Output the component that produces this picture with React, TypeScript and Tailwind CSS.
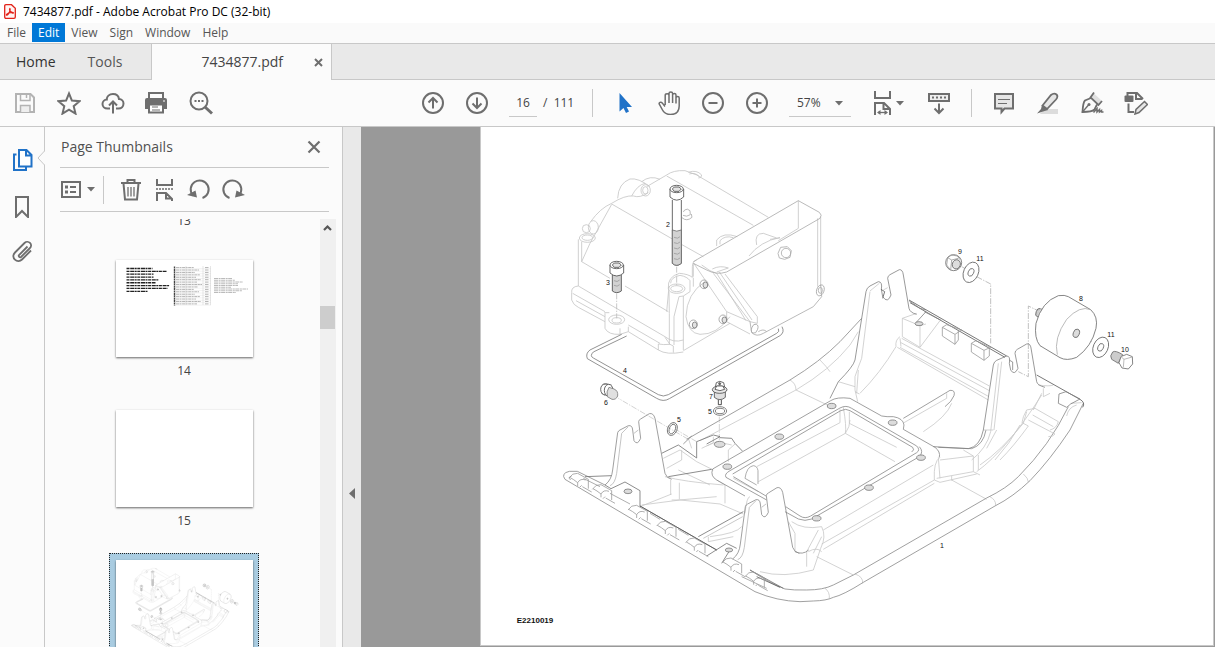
import React from "react";

const G = "#6e6e6e";

type IconProps = { box: string; w?: string; children: React.ReactNode };

function Icon({ box, w = "w-6 h-6", children }: IconProps) {
  return (
    <svg viewBox={box} className={`${w} shrink-0`} fill="none" stroke={G} strokeWidth="2" aria-hidden="true">
      {children}
    </svg>
  );
}

function Tool({ label, className = "w-11", children }: { label: string; className?: string; children: React.ReactNode }) {
  return (
    <button type="button" aria-label={label} className={`flex h-9 shrink-0 items-center justify-center ${className}`}>
      {children}
    </button>
  );
}

function Caret() {
  return (
    <svg viewBox="0 0 8 5" className="h-[5px] w-2 shrink-0" aria-hidden="true">
      <path d="M0 0h8L4 4.6z" fill={G} />
    </svg>
  );
}

const EAR =
  "M165 345Q185 330 188 300L203 188Q205 182 210 180L235 167Q247 165 248 180L252 212Q262 228 272 205L266 155Q266 150 272 147L298 131Q310 128 315 145L345 310Q350 325 365 328";
const EAR_INNER = "M215 190L200 310Q195 342 180 347M235 170L215 190M252 190L265 180";
const TEETH: [number, number][] = [
  [75, 328],
  [145, 362],
  [252, 424],
  [338, 472],
  [425, 522],
  [535, 582],
  [603, 624],
];
const HOLES: [number, number][] = [
  [845, 108],
  [688, 200],
  [532, 290],
  [800, 445],
  [1028, 158],
  [1113, 263],
  [957, 353],
];
const LABELS: [string, number, number][] = [
  ["2", 668, 227],
  ["3", 608, 285],
  ["4", 625, 373],
  ["6", 606, 405],
  ["7", 711, 399],
  ["5", 710, 414],
  ["5", 679, 422],
  ["9", 960, 254],
  ["11", 980, 261],
  ["8", 1081, 301],
  ["11", 1111, 337],
  ["10", 1125, 352],
  ["1", 942, 548],
];

function Housing() {
  return (
    <g transform="translate(550 150) scale(.33333)">
      <g stroke="#c4c4c4">
        <path d="M85 408V268M65 428Q63 410 85 408L165 455L345 560Q370 580 400 570M65 428V450Q70 465 85 472L165 515M68 430L165 485M235 525L330 580M78 452L165 500M95 335L120 280L185 163M95 335V275M95 335L180 385M225 408L355 485" />
        <ellipse cx="112" cy="264" rx="24" ry="13" />
        <ellipse cx="112" cy="263" rx="16" ry="8" />
        <circle cx="109" cy="236" r="12" />
        <ellipse cx="130" cy="232" rx="15" ry="20" />
        <path d="M122 215Q150 175 185 160Q225 135 250 138Q270 145 295 128M203 145Q205 100 240 87Q265 83 300 110M245 138Q262 105 285 100M275 95Q300 75 330 88M290 110L350 75Q370 60 405 62L440 75L655 202M350 78L610 226M185 162L367 267M394 283L460 320" />
        <ellipse cx="287" cy="121" rx="14" ry="17" />
        <ellipse cx="286" cy="121" rx="8" ry="11" />
        <path d="M415 67Q440 58 455 75Q455 85 445 84M418 72Q436 66 448 80" />
        <ellipse cx="200" cy="509" rx="24" ry="14" />
        <ellipse cx="200" cy="511" rx="14" ry="8" />
        <path d="M165 490V535Q175 555 210 553L235 545V530M210 553V535M163 488L178 488M235 545L325 600Q350 616 400 606M325 600V582Q340 585 360 583L345 562M370 608V588L360 583" />
        <ellipse cx="380" cy="416" rx="25" ry="14" />
        <ellipse cx="380" cy="416" rx="18" ry="9" />
        <path d="M357 410L350 485M357 425L358 490V583M400 438L387 440L372 500V585M400 438V600M355 415Q352 380 388 370Q415 372 427 382V350Q427 335 440 330M362 400Q362 382 390 376Q412 380 420 392V425L400 438M430 383V410M400 602L540 520" />
        <path d="M430 340V380M490 370L600 515M455 345L480 362L500 370L588 512M525 372L622 500V520L600 515L530 485M430 338L530 485V515L600 552M508 366L606 510" />
        <path d="M745 152V235L685 272M812 200V408M803 205V410M500 288V270Q520 245 562 260M510 283V272Q525 255 550 263M620 285Q612 250 640 250L680 264M597 318Q630 275 690 262M487 357Q510 345 535 354L500 366M660 268L690 264" />
        <path d="M465 395Q410 430 408 500Q415 550 450 553Q500 555 540 500" />
      </g>
      <g stroke="#a8a8a8">
        <path d="M430 335L745 152L808 187Q818 195 810 205L530 366Q500 376 470 360L430 340M812 405L815 440L790 470L640 550Q620 562 605 548L600 515M625 545Q640 535 650 545" />
        <ellipse cx="811" cy="421" rx="11" ry="17" transform="rotate(20 811 421)" />
        <ellipse cx="811" cy="421" rx="6" ry="9" />
        <ellipse cx="614" cy="536" rx="9" ry="14" transform="rotate(20 614 536)" />
        <path d="M684 310L692 292L712 290L724 302L720 322L704 328L688 324Z" />
        <circle cx="708" cy="309" r="14" />
        <path d="M400 186L404 180Q412 174 420 182L421 194Q410 202 399 196M396 203Q410 216 426 202L424 192" />
      </g>
      <g stroke="#777">
        {[
          [462, 403],
          [430, 523],
          [519, 508],
        ].map(([x, y]) => (
          <g key={x}>
            <ellipse cx={x} cy={y} rx="12" ry="13" stroke="#999" />
            <ellipse cx={x + 4} cy={y + 2} rx="7" ry="9" fill="#e2e2e2" />
          </g>
        ))}
      </g>
      <g stroke="#444">
        <path d="M367 150V340Q380 352 394 340V150" fill="#fff" />
        <path d="M367 240Q380 247 394 240V340Q380 352 367 340Z" fill="#d2d2d2" stroke="#666" />
        <path d="M372 262q12 6 18-2M372 278q12 6 18-2M372 294q12 6 18-2M372 310q12 6 18-2M372 326q12 6 18-2" stroke="#999" />
        <path d="M360 117V141Q380 160 401 141V117" fill="#fff" />
        <ellipse cx="380" cy="117" rx="20" ry="11" fill="#fff" />
        <path d="M367 117L373 111H387L394 117L387 124H373Z" fill="#e4e4e4" />
        <path d="M187 375V423Q200 433 214 423V375" fill="#d2d2d2" />
        <path d="M192 392q10 6 17-2M192 406q10 6 17-2" stroke="#999" />
        <path d="M180 345V369Q200 387 221 369V345" fill="#fff" />
        <ellipse cx="200" cy="345" rx="20" ry="11" fill="#fff" />
        <path d="M187 345L193 339H207L214 345L207 352H193Z" fill="#e4e4e4" />
      </g>
      <path d="M380 350V408M200 430V505" stroke="#bbb" strokeDasharray="18 4 4 4" />
      <path
        d="M215 553L120 600Q106 610 112 626L320 745Q340 757 358 746L690 557Q705 547 696 530M230 558L130 606Q118 618 130 624L325 734Q340 742 355 734L680 550Q690 545 685 536"
        stroke="#777"
      />
      <g stroke="#444">
        <ellipse cx="166" cy="718" rx="14" ry="17" fill="#fff" />
        <path d="M158 704L172 702L186 706M154 730L166 736" stroke="#777" />
        <ellipse cx="176" cy="721" rx="13" ry="18" fill="#fff" />
        <path d="M177 712L192 717Q205 722 203 738Q198 750 186 748L172 740Q168 725 177 712Z" fill="#e0e0e0" stroke="#777" />
        <path d="M495 716L499 698Q509 690 521 698L525 716" fill="#fff" />
        <path d="M493 726V742Q510 756 526 742V726" fill="#e0e0e0" />
        <ellipse cx="509" cy="719" rx="22" ry="11" fill="#e8e8e8" />
        <path d="M495 718L500 708L518 708L524 718Q510 726 495 718Z" fill="#fff" />
        <circle cx="509" cy="701" r="3" fill="#777" />
        <path d="M505 750V764H514V750" stroke="#222" />
      </g>
    </g>
  );
}

function RightSide() {
  return (
    <g transform="translate(820 230) scale(.33333)">
      <g stroke="#c8c8c8">
        <path d="M150 185L125 385Q115 410 105 440V480L113 515M178 160L150 183M190 180L203 173M115 420L110 490M55 455L105 470M118 492L105 485" />
        <path d="M247 265V320L300 352L360 272M300 352V287L247 265L290 250M300 287L318 282M240 320Q225 330 228 350Q180 430 120 490M245 325L508 468M243 338L508 482M232 352L505 510M240 352L505 499M240 325L243 350M395 520Q380 560 310 605M380 490V505L252 578M535 400L512 605Q500 655 455 690M530 600L500 655M545 395L522 600M520 600L490 600" />
        <path d="M645 535L620 540Q608 560 606 578L625 588Q580 650 540 690M645 535L715 575Q710 595 690 600M638 555L700 590M625 570L705 612Q700 620 685 620M640 540L665 490M655 465Q690 470 700 465M670 475V500L690 490M770 525Q745 532 740 558M600 585Q570 640 525 690M752 520L785 518" />
        <path d="M470 140L512 162V340M660 245L625 228V440L595 425M775 318L815 335M425 110L440 118" strokeDasharray="18 4 4 4" stroke="#b0b0b0" />
      </g>
      <g stroke="#808080">
        <path d="M30 505L55 455Q100 410 105 390L138 185Q140 173 150 168L175 155Q188 155 184 178L188 200Q203 222 213 195L203 145Q203 138 210 134L238 119Q248 118 250 135L267 235Q270 248 290 253" />
        <path d="M183 178L194 185L188 205M267 210L560 378M270 218L555 382M650 435L780 508Q797 518 788 532" stroke="#555" />
        <path d="M318 245L288 278M313 245L362 270M267 212L300 235L318 240" />
        <path d="M367 292V318L405 343V313ZM367 292L380 284L425 300L405 313M415 300V330L405 343" stroke="#999" />
        <path d="M454 340V366L492 391V361ZM454 340L468 332L512 352L492 361M508 355V378L492 391" stroke="#999" />
        <path d="M340 650L445 656Q480 650 490 600L520 405Q522 395 530 391L560 378Q572 378 568 400L572 420Q583 438 594 415L585 370Q585 362 592 358L620 342Q632 338 634 360L650 455Q652 466 675 472" />
        <path d="M567 390L578 396V420" />
        <path d="M717 492L738 485L780 507L752 522L740 532L715 520Z" />
        <path d="M250 565L390 481Q407 480 402 497Q395 515 375 530" stroke="#888" />
      </g>
      <ellipse cx="297" cy="281" rx="12" ry="6" fill="#ddd" stroke="#777" />
      <g stroke="#666" fill="#fff">
        <ellipse cx="656" cy="248" rx="8" ry="13" fill="#ccc" transform="rotate(20 656 248)" />
        <path d="M662 236L680 245L668 265L652 260" fill="#ddd" />
        <path d="M720 383L660 347Q642 325 648 280Q665 215 715 197Q735 194 745 200L812 239Q835 260 828 295Q815 350 770 382Q740 394 720 383Z" />
        <path d="M812 239Q780 225 740 268Q700 325 712 374" fill="none" stroke="#aaa" />
        <ellipse cx="769" cy="310" rx="9" ry="13" fill="#ddd" transform="rotate(20 769 310)" />
        <circle cx="401" cy="98" r="24" />
        <path d="M383 83L395 75L412 78L421 90M383 83L380 105L392 120L395 90ZM395 90L415 85" fill="none" stroke="#999" />
        <ellipse cx="409" cy="103" rx="12" ry="14" fill="#ddd" transform="rotate(20 409 103)" />
        {[
          [453, 127],
          [842, 352],
        ].map(([x, y]) => (
          <g key={x} transform={`rotate(24 ${x} ${y})`}>
            <ellipse cx={x} cy={y} rx="22" ry="32" />
            <ellipse cx={x} cy={y} rx="8" ry="12" />
          </g>
        ))}
        <path d="M878 366Q886 360 908 374L895 400L875 388Q868 378 878 366Z" fill="#ccc" />
        <path d="M897 398L903 380L920 373L937 380L938 402L925 417L906 414Z" />
        <path d="M903 380L912 388L937 381M912 388L910 412" stroke="#aaa" />
      </g>
    </g>
  );
}

function Tray() {
  return (
    <g transform="translate(550 370) scale(.33333)">
      <g stroke="#c8c8c8">
        <path d="M450 212L738 60Q840 0 900-75L925-115M720 30Q738 40 738 60L832 105M810-30Q830-10 840 5" />
        <path d="M340 265L390 240L440 275L490 300M395 240V270L350 295M415 205L425 235M385 300L480 345M345 320Q400 335 520 345M362 330V375M388 338V388M365 372L270 410M365 390H388L500 380M275 405L390 390L510 402L580 432M525 345V400M500 330L525 345M480 500Q560 490 575 470M475 500V515L550 500" />
        <path d="M880 112Q890 170 886 190L625 335M870 118V158L620 290M886 190L1035 275M898 125V160L1040 232M886 190Q900 170 900 150M550 325L625 365" />
        <path d="M725 455Q760 480 815 470Q830 500 812 535L790 600M770 545L805 480M770 545V590M735 545V490L715 455M790 550L815 500M630 605Q700 625 790 600M800 560L910 615M775 545Q800 530 815 545M600 380Q590 380 585 430" />
        <path d="M1150 285L820 480M1153 330L815 522M1153 340L820 538M1170 262Q1150 275 1153 330L1170 337L1280 312M1165 262L1170 325M1170 270L1270 258V305M1285 255V300M1160 325L1270 305L1290 315M1205 330L1310 388M1205 318V332M1270 258L1240 240" />
        <path d="M585 325Q590 290 610 287Q622 288 624 302V342M585 325L620 345" stroke="#999" />
        <path d="M1420 312Q1435 325 1435 336M1320 380Q1338 390 1337 406M915 612Q940 620 938 640M825 655Q840 665 838 687M470 228L500 215L545 225M555 222L535 240V275M490 200V218L455 235" />
        <path d="M1475 75Q1370 240 1280 305M1430 125L1420 160Q1350 245 1290 285" />
        <path d="M415 208L205 85M508 210V140M440 215L380 180" strokeDasharray="18 4 4 4" />
      </g>
      <g stroke="#888">
        <path d="M410 208L720 30Q810-25 870-85L935-155M400 222L425 198" />
        <path d="M45 328Q32 310 58 304L82 304L165 345M45 328L615 665Q680 693 750 695L790 693Q830 692 850 682Q880 675 940 637L1335 408Q1390 380 1440 332Q1500 270 1560 180L1600 100" />
        <path d="M600 600Q660 640 705 657Q730 661 770 660Q820 660 850 645L910 615L1310 384Q1370 355 1405 320Q1500 225 1555 110" />
        <path d="M488 297L842 92Q860 80 900 85L995 138Q1010 141 1030 140Q1060 145 1062 165L1060 178L1155 232Q1172 245 1168 262M488 297Q480 318 500 330L585 378" />
        <path d="M540 302Q522 312 528 322L650 390M550 320L648 378M540 302L870 114Q888 104 905 115L1100 228Q1112 240 1100 248L782 438Q765 448 750 438L707 410M548 312L872 122Q888 114 900 122L1088 232Q1095 240 1085 246M705 425L745 447Q765 455 785 447L1108 260Q1122 245 1108 230" />
        <path d="M105 320L185 317M355 320L485 298M335 250L385 225L440 264V215L490 195L510 200L470 222M510 203L545 205L555 220L577 243M270 408L500 540M445 500L580 425M165 345L183 356L225 336L270 362V410M470 558L530 520L560 535M600 600L700 655M540 540L515 580" stroke="#707070" />
        <path d="M270 408L500 540M620 620L690 652" stroke="#555" />
        <path d="M460 505L578 440" stroke="#bbb" />
        <path d={EAR} />
        <path d={EAR} transform="translate(383 222)" />
        <path d={EAR_INNER} stroke="#b5b5b5" />
        <path d={EAR_INNER} transform="translate(383 222)" stroke="#b5b5b5" />
        <path d="M735 545Q758 556 776 540" />
        <path d="M1165 232L1265 236Q1300 225 1308 180" />
      </g>
      <g stroke="#999">
        {TEETH.map(([x, y]) => (
          <path
            key={x}
            transform={`translate(${x} ${y})`}
            d="M-18-4Q-8-20 8-18L40 0V28M-16-6Q-4 0 8 10Q16-4 32 2M8 10V20M20 18L14 24M22 22L50 38"
          />
        ))}
        <path d="M65 318Q52 322 62 330M100 325L150 350M180 370L240 402M300 430L330 448M385 478L415 496M575 620L650 655" />
      </g>
      <g stroke="#777" fill="#dcdcdc">
        {HOLES.map(([x, y]) => (
          <ellipse key={x} cx={x} cy={y} rx="13" ry="8" />
        ))}
        <ellipse cx="509" cy="223" rx="16" ry="9" />
        <ellipse cx="234" cy="364" rx="12" ry="7" />
        <ellipse cx="537" cy="540" rx="11" ry="6" />
      </g>
      <g stroke="#666">
        <ellipse cx="510" cy="123" rx="20" ry="13" />
        <ellipse cx="510" cy="123" rx="14" ry="8" />
        <g transform="rotate(22 367 177)">
          <ellipse cx="367" cy="177" rx="14" ry="20" />
          <ellipse cx="367" cy="177" rx="9" ry="15" />
        </g>
      </g>
    </g>
  );
}

function PartsDrawing({ className, labelled = false }: { className: string; labelled?: boolean }) {
  return (
    <svg viewBox="481 127 732 518" className={className} fill="none" strokeWidth="2.4" strokeLinejoin="round" role="img" aria-label="Exploded parts drawing">
      <Tray />
      <RightSide />
      <Housing />
      {labelled && (
        <g fill="#111" stroke="none" className="font-['Liberation_Sans',Arial,sans-serif] text-[7px]" textAnchor="middle">
          {LABELS.map(([t, x, y]) => (
            <text key={`${x}-${y}`} x={x} y={y}>
              {t}
            </text>
          ))}
          <text x="535" y="623" className="text-[8px] font-bold">
            E2210019
          </text>
        </g>
      )}
    </svg>
  );
}

function PartsListThumb() {
  const bold = [26, 40, 27, 27, 32, 29, 43, 41, 21];
  const notes = [18, 21, 29, 24, 24, 17, 34, 28, 22];
  return (
    <svg viewBox="0 0 137 97" className="h-full w-full" fill="none" aria-hidden="true">
      {bold.map((n, i) => (
        <path key={i} d={`M10.500 ${8.5 + i * 2.85}h${n}`} stroke="#222" strokeWidth="1.300" strokeDasharray="3 .7 4 .5 2 .6" />
      ))}
      {Array.from({ length: 16 }, (_, i) => (
        <g key={i}>
          <path d={`M60 ${7.6 + i * 2.42}h${18 + ((i * 5) % 9)}M89 ${7.6 + i * 2.42}h4`} stroke="#aaa" strokeWidth=".9" strokeDasharray="3 .5 2 .6" />
          <path d={`M58 ${8.8 + i * 2.42}h37`} stroke="#ddd" strokeWidth=".4" />
        </g>
      ))}
      <path d="M58.500 6.500v39" stroke="#444" strokeWidth="1.400" strokeDasharray="2 .4" />
      <path d="M70 6v39M87 6v39M94.500 6v39" stroke="#ccc" strokeWidth=".5" />
      {notes.map((n, i) => (
        <path key={i} d={`M98 ${18.5 + i * 1.75}h${n}`} stroke="#aaa" strokeWidth=".8" strokeDasharray="4 .6 2 .5" />
      ))}
    </svg>
  );
}

const PAGE = "block h-[97px] w-[137px] bg-white shadow-[0_1px_2px_rgba(0,0,0,0.6)]";
const LABEL = "text-center text-xs leading-[18px] text-[#444]";

function TitleBar() {
  return (
    <header className="flex h-[23px] shrink-0 items-center gap-[7px] bg-white pl-1 text-xs text-black">
      <svg viewBox="0 0 12 15" className="h-[15px] w-3" fill="none" stroke="#e2231a" aria-hidden="true">
        <path d="M1.500.7h6L11.300 4.300V13q0 1.300-1.300 1.300H2Q.7 14.300.7 13V2Q.7.7 2 .7" strokeWidth="1.300" fill="#fff5f4" />
        <path d="M5.800 4.500c-.8 1.200.7 3.200 2.400 4.500 1.600.8 1.700-.6 0-.6-2 0-4.800 1.100-5.700 2.100-.6 1.200 1 .8 2-.9C5.600 7.800 6.500 5 5.800 4.500z" strokeWidth="1.200" />
      </svg>
      <h1>7434877.pdf - Adobe Acrobat Pro DC (32-bit)</h1>
    </header>
  );
}

function MenuBar() {
  return (
    <nav className="flex h-5 shrink-0 items-start bg-[#fafafa] pl-px text-xs text-[#555]">
      {["File", "Edit", "View", "Sign", "Window", "Help"].map((m) => (
        <button key={m} type="button" className={`h-[19px] px-[6px] leading-[19px] ${m === "Edit" ? "bg-[#0078d7] text-white" : ""}`}>
          {m}
        </button>
      ))}
    </nav>
  );
}

function TabBar() {
  return (
    <div className="flex h-[37px] shrink-0 border-t border-[#c8c8c8] bg-[#e9e9e9] text-sm">
      <div className="flex w-[152px] items-center gap-8 border-r border-b border-[#c8c8c8] pl-4">
        <button type="button" className="text-[#333]">Home</button>
        <button type="button" className="text-[#555]">Tools</button>
      </div>
      <div className="flex w-[180px] items-center justify-end border-r border-[#c8c8c8] bg-[#fbfbfb] pr-2">
        <span className="text-[#444]">7434877.pdf</span>
        <button type="button" aria-label="Close tab" className="ml-[31px]">
          <svg viewBox="0 0 9 9" className="h-[9px] w-[9px]" stroke={G} strokeWidth="2" aria-hidden="true">
            <path d="M1 1l7 7M8 1L1 8" />
          </svg>
        </button>
      </div>
      <div className="flex-1 border-b border-[#c8c8c8]" />
    </div>
  );
}

function Toolbar() {
  return (
    <div className="flex h-[47px] shrink-0 items-center border-b border-[#c8c8c8] bg-[#fbfbfb] pl-[3px] text-xs text-[#444]">
      <Tool label="Save">
        <Icon box="13 91 24 24">
          <g stroke="#b3b3b3">
            <path d="M16 94H30.500L34 97.500V112H16z" />
            <path d="M20.500 94v6.500h9.500V94M26.500 94.500v3.500" strokeWidth="1.500" />
            <path d="M20.500 112v-6.500h9.500v6.500" strokeWidth="1.500" fill="#eee" />
          </g>
        </Icon>
      </Tool>
      <Tool label="Star">
        <Icon box="57 91 24 24">
          <path d="M69 93.500l2.900 7.100 7.700.6-5.900 5 1.800 7.400-6.500-4-6.500 4 1.800-7.400-5.900-5 7.700-.6z" />
        </Icon>
      </Tool>
      <Tool label="Upload">
        <Icon box="101 91 24 24">
          <path d="M110 108.500h-2.500c-3 0-5-2-5-4.500s2-4.400 4.300-4.500c-.3-3 2.500-5.500 6.200-5.500s5.600 2.200 6 5c2.700 0 4.500 2 4.500 4.600 0 3-2.200 4.900-5 4.900H116M113 113.500V102M109 105.500l4-4 4 4" />
        </Icon>
      </Tool>
      <Tool label="Print" className="w-[42px]">
        <Icon box="144 91 24 24">
          <path d="M149 98v-5h14v5" />
          <path d="M147 98h18q2 0 2 2v9h-3v-4h-16v4h-3v-9q0-2 2-2z" fill={G} stroke="none" />
          <path d="M149 104.500h14v8h-14z" fill="#fff" />
          <path d="M152 107h6M152 110h8" strokeWidth="1" />
          <path d="M163 101h2" stroke="#fff" strokeWidth="1" />
        </Icon>
      </Tool>
      <Tool label="Search" className="w-12">
        <Icon box="189 91 24 24">
          <circle cx="199" cy="101" r="8.500" />
          <path d="M205 107l7 6.500" strokeWidth="3" />
          <path d="M194.500 101h2M198 101h2M201.500 101h2" />
        </Icon>
      </Tool>
      <div className="max-w-[186px] flex-1" />
      <Tool label="Previous page">
        <Icon box="0 0 24 24">
          <circle cx="12" cy="12" r="10" />
          <path d="M12 17.500V7.500M7.500 11.500L12 7l4.500 4.500" />
        </Icon>
      </Tool>
      <Tool label="Next page">
        <Icon box="0 0 24 24">
          <circle cx="12" cy="12" r="10" />
          <path d="M12 6.500v10M7.500 12.500L12 17l4.500-4.500" />
        </Icon>
      </Tool>
      <input aria-label="Page number" defaultValue="16" className="ml-[10px] h-7 w-7 border-b border-[#c8c8c8] bg-transparent text-center outline-none" />
      <span className="ml-[6px] w-[49px] whitespace-pre">/  111</span>
      <div className="mr-[10px] h-7 w-px bg-[#c8c8c8]" />
      <Tool label="Select">
        <Icon box="613 91 24 24">
          <path d="M619.500 93v18.500l4-3.500 2.500 5 3-1.500-2.300-4.500h5.300z" fill="#2072c8" stroke="none" />
        </Icon>
      </Tool>
      <Tool label="Pan">
        <Icon box="657 91 24 24">
          <path
            strokeWidth="1.500"
            strokeLinejoin="round"
            d="M665 106.500l-2.800-3.600c-1.300-1.500-3.600-.4-2.900 1.300l3.200 5.800c1.500 2.800 3.500 4.500 8 4.500 5.500 0 8.700-3 8.700-8.500V98c0-2-3.200-2-3.200 0v5.500M676 99v-4c0-2-3.400-2-3.400 0v8M672.600 96v-2.500c0-2-3.600-2-3.600 0v9.500M669 95.500c0-2.200-3.800-2.200-3.800 0v9.500"
          />
        </Icon>
      </Tool>
      <Tool label="Zoom out">
        <Icon box="0 0 24 24">
          <circle cx="12" cy="12" r="10" />
          <path d="M7.500 12h9" />
        </Icon>
      </Tool>
      <Tool label="Zoom in">
        <Icon box="0 0 24 24">
          <circle cx="12" cy="12" r="10" />
          <path d="M7.500 12h9M12 7.500v9" />
        </Icon>
      </Tool>
      <div className="relative ml-[10px] h-7 w-[62px] shrink-0">
        <select aria-label="Zoom level" defaultValue="57%" className="h-7 w-full appearance-none border-b border-[#c8c8c8] bg-transparent pl-2 outline-none">
          <option>57%</option>
          <option>100%</option>
        </select>
        <span className="pointer-events-none absolute top-3 right-2">
          <Caret />
        </span>
      </div>
      <Tool label="Fit width" className="ml-[19px] w-[34px] gap-[2px]">
        <Icon box="870 91 24 24">
          <path d="M875 91v7h15v-7" />
          <path d="M875 115v-12h9l6 6v6M883.500 103v6h6.500" />
          <path d="M878 112.500h9" strokeWidth="1.300" />
          <path d="M880.500 110v5l-3.500-2.500zM884.500 110v5l3.500-2.500z" fill={G} stroke="none" />
        </Icon>
        <Caret />
      </Tool>
      <Tool label="Scrolling" className="ml-[13px] w-11">
        <Icon box="927 91 24 24">
          <path d="M929 94h20v7h-20z" fill="#eee" />
          <path d="M932 97.500h14" strokeWidth="2" strokeDasharray="2 2" />
          <path d="M939 103.500v9M934.500 108.500l4.500 4.500 4.500-4.500" />
        </Icon>
      </Tool>
      <div className="mr-[10px] ml-[10px] h-7 w-px bg-[#c8c8c8]" />
      <Tool label="Comment">
        <Icon box="992 91 24 24">
          <path d="M995 94h18v14.500h-8.500l-3 3.500v-3.500H995z" fill="#e6e6e6" />
          <path d="M998 99.500h12M998 103.500h9" strokeWidth="1.200" />
        </Icon>
      </Tool>
      <Tool label="Highlight">
        <Icon box="1036 91 24 24">
          <path d="M1044 109h14v5h-18z" fill="#dcdcdc" stroke="none" />
          <path d="M1042.500 105.500l8.500-10.500q3-2.500 5.500-.5 2 2-.5 5l-9 9.500z" fill="#e6e6e6" strokeWidth="1.800" />
          <path d="M1042 105l6 5-5 1.500-6 2 4-4.500z" fill={G} stroke="none" />
        </Icon>
      </Tool>
      <Tool label="Sign">
        <Icon box="1080 91 24 24">
          <path d="M1093.500 93l-3 4 8 7.500 3-4z" fill="#e0e0e0" stroke="none" />
          <path d="M1094 92.500l-3.500 5 8 7.500 3.500-4" strokeWidth="1.800" />
          <path d="M1091 98l-6 2.500q-2 2-2.500 11.500 9.500 0 12-2.500l2.500-5" strokeWidth="1.800" />
          <path d="M1082 112.500l6.500-7.500" strokeWidth="1.300" />
          <circle cx="1089" cy="104.500" r="1.500" fill={G} stroke="none" />
          <path d="M1093.500 112.500l3.500-4v3.500l2.500-2.500v2.500l2-1.500v1.500h2" strokeWidth="1.500" />
        </Icon>
      </Tool>
      <Tool label="Edit PDF">
        <Icon box="1124 91 24 24">
          <path d="M1127.500 96v-3h9.500l6 6M1136 93v6h6.500M1128.500 103.500v8.500h5.500" />
          <rect x="1124.500" y="95.500" width="9" height="6.500" rx="1" fill={G} stroke="none" />
          <path d="M1135 114l1-4.500 8.500-8 3 3-8.500 8z" fill="#e6e6e6" strokeWidth="1.500" />
        </Icon>
      </Tool>
    </div>
  );
}

function Rail() {
  return (
    <aside className="relative flex w-[45px] shrink-0 flex-col items-center gap-[10px] border-r border-[#c8c8c8] bg-[#fbfbfb] pt-[15px]">
      <Tool label="Page thumbnails">
        <Icon box="11 148 24 24">
          <g stroke="#2072c8">
            <path d="M17.500 154.500H15v15.500h12v-3" />
            <path d="M20 150h7.500l5 5v11.500H20zM27 150.500v5h5" fill="#fff" />
          </g>
        </Icon>
      </Tool>
      <Tool label="Bookmarks">
        <Icon box="10 194 24 24">
          <path d="M16 197h12v20l-6-6-6 6z" />
        </Icon>
      </Tool>
      <Tool label="Attachments">
        <Icon box="10 240 24 24">
          <path d="M27.500 246.500l-8.500 8.500c-1 1.200.8 3 2 2l8.500-8.500c4.500-4-1.500-9-5-5.500L15 252.500c-5 5 2.500 11.500 7 7l9-9" strokeWidth="1.800" />
        </Icon>
      </Tool>
      <svg viewBox="0 0 8 14" className="absolute top-[24px] right-[-1px] h-[14px] w-2" fill="#fbfbfb" aria-hidden="true">
        <path d="M8 0L1 7l7 7z" />
        <path d="M7.500 0L1 7l6.500 7" stroke="#c8c8c8" />
      </svg>
    </aside>
  );
}

function ThumbnailPanel() {
  return (
    <section className="flex w-[298px] shrink-0 flex-col border-r border-[#c8c8c8] bg-[#fbfbfb]">
      <div className="mr-[13px] ml-[15px] flex h-[41px] shrink-0 items-center justify-between border-b border-[#c8c8c8] pr-2 pl-px">
        <h2 className="text-sm text-[#505050]">Page Thumbnails</h2>
        <button type="button" aria-label="Close panel">
          <svg viewBox="0 0 14 14" className="h-[14px] w-[14px]" stroke={G} strokeWidth="2.200" aria-hidden="true">
            <path d="M1.500 1.500l11 11M12.500 1.500l-11 11" />
          </svg>
        </button>
      </div>
      <div className="mr-[13px] ml-[15px] flex h-11 shrink-0 items-center border-b border-[#c8c8c8]">
        <Tool label="Options" className="w-[35px] gap-[5px]">
          <Icon box="60 180 22 20" w="h-5 w-[22px]">
            <path d="M62 182h18v15H62z" />
            <path d="M65 187h3M65 192h3" strokeWidth="3" />
            <path d="M70 187h6M70 192h6" />
          </Icon>
          <Caret />
        </Tool>
        <div className="ml-[8px] h-7 w-px bg-[#c8c8c8]" />
        <Tool label="Delete" className="ml-[10px] w-[34px]">
          <Icon box="119 177 24 24">
            <path d="M121 182h20M127.500 181.500V179h7v2.500M123.500 182.500l1.500 16h12l1.500-16" />
            <path d="M128 186v9.500M131 186v9.500M134 186v9.500" strokeWidth="1.300" />
          </Icon>
        </Tool>
        <Tool label="Split" className="w-[34px]">
          <Icon box="153 177 24 24">
            <path d="M157 178v6h15v-6" />
            <path d="M156 188h18" strokeDasharray="2 1" strokeWidth="1.500" />
            <path d="M157 200v-8h9l6 6v2M166 192v5.500h5.500" />
          </Icon>
        </Tool>
        <Tool label="Rotate left" className="w-[34px]">
          <Icon box="188 178 24 24">
            <path d="M194 195.500a9 9 0 1 1 9.500 2.500" />
            <path d="M188 195l10 2.500-1.500-7z" fill={G} stroke="none" />
          </Icon>
        </Tool>
        <Tool label="Rotate right" className="w-[34px]">
          <Icon box="221 178 24 24">
            <path d="M239 195.500a9 9 0 1 0-9.500 2.500" />
            <path d="M245 195l-10 2.500 1.500-7z" fill={G} stroke="none" />
          </Icon>
        </Tool>
      </div>
      <div className="mt-[7px] flex min-h-0 flex-1 pr-[6px]">
        <div className="min-w-0 flex-1 overflow-hidden pl-[64px]">
          <div className="-mt-[7px] flex w-[150px] flex-col items-center">
            <span className={LABEL}>13</span>
            <button type="button" aria-label="Page 14" className={`${PAGE} mt-[30px]`}>
              <PartsListThumb />
            </button>
            <span className={`${LABEL} mt-[5px]`}>14</span>
            <button type="button" aria-label="Page 15" className={`${PAGE} mt-[30px]`} />
            <span className={`${LABEL} mt-[5px]`}>15</span>
            <div className="mt-[23px] flex w-full flex-col items-center border border-dotted border-[#222] bg-[#a9cce1] pt-[6px] pb-7">
              <button type="button" aria-label="Page 16" className={PAGE}>
                <PartsDrawing className="h-full w-full" />
              </button>
            </div>
          </div>
        </div>
        <div className="flex w-4 shrink-0 flex-col bg-[#f0f0f0]">
          <svg viewBox="0 0 16 18" className="h-[18px] w-4" fill="none" stroke="#555" strokeWidth="2.200" aria-hidden="true">
            <path d="M4 11L7.500 7.500l3.500 3.500" />
          </svg>
          <div className="mt-[69px] h-[23px] w-[15px] bg-[#cdcdcd]" />
        </div>
      </div>
    </section>
  );
}

export default function App() {
  return (
    <div className="flex h-screen flex-col overflow-hidden bg-[#fbfbfb] font-['Open_Sans','Noto_Sans',sans-serif]">
      <TitleBar />
      <MenuBar />
      <TabBar />
      <Toolbar />
      <div className="flex min-h-0 flex-1">
        <Rail />
        <ThumbnailPanel />
        <button type="button" aria-label="Collapse panel" className="flex w-[18px] shrink-0 items-center justify-center bg-[#e9e9e9] pt-[213px]">
          <svg viewBox="0 0 6 11" className="h-[11px] w-[6px]" aria-hidden="true">
            <path d="M6 0v11L0 5.500z" fill={G} />
          </svg>
        </button>
        <main className="flex min-w-0 flex-1 bg-[#999] pr-px pb-px pl-[119px]">
          <div className="min-w-0 flex-1 border-r border-b border-l border-[#c8c8c8] bg-white">
            <PartsDrawing className="h-full w-full" labelled />
          </div>
        </main>
      </div>
    </div>
  );
}
